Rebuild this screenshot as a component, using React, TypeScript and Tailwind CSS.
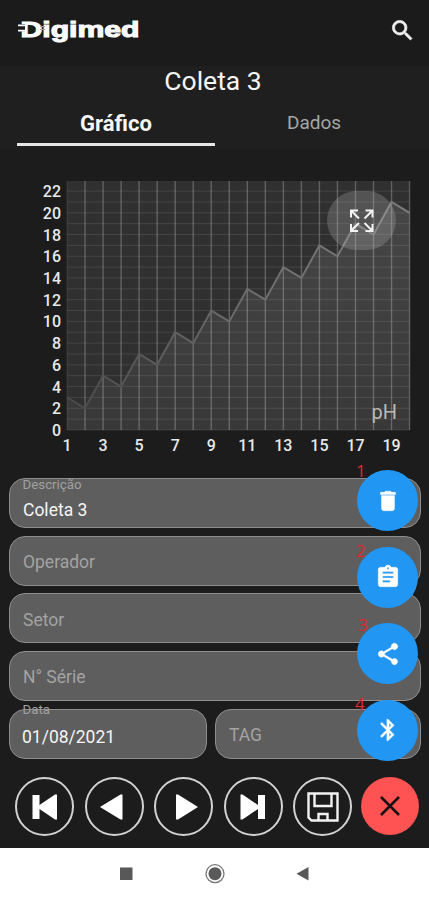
import { MdAssignment, MdBluetooth, MdDelete, MdSearch, MdShare } from "react-icons/md";
import type { ReactNode } from "react";

const readings = [3, 2, 5, 4, 7, 6, 9, 8, 11, 10, 13, 12, 15, 14, 17, 16, 19, 18, 21, 20];

const LEFT = 67;
const BOTTOM = 281;
const TOP = 32;
const STEP_X = 18.03;
const STEP_Y = 10.86;

const xAt = (index: number) => LEFT + index * STEP_X;
const yAt = (value: number) => BOTTOM - value * STEP_Y;

const Logo = () => (
  <svg width="124" height="30" viewBox="0 0 124 30" className="overflow-visible">
    <g fill="#fafafa" stroke="#fafafa" strokeWidth="1.1" fontFamily="'Liberation Sans', sans-serif" fontWeight="700">
      <text x="2.5" y="21.5" fontSize="22.5" textLength="119" lengthAdjust="spacingAndGlyphs">
        Digimed
      </text>
    </g>
    <rect x="1" y="9.2" width="6" height="7" fill="#1b1b1b" />
    <path d="M0 10.4h9M0 15.6h9" stroke="#fafafa" strokeWidth="1.6" />
    <path d="M22 11.5h5M22 14.5h5" stroke="#9d9d9d" strokeWidth="1" />
  </svg>
);

const Chart = () => {
  const points = readings.map((value, i) => `${xAt(i)},${yAt(value)}`).join(" ");
  const right = xAt(readings.length - 1);

  return (
    <svg width="429" height="322" viewBox="0 0 429 322" className="block">
      <defs>
        <linearGradient id="line" gradientUnits="userSpaceOnUse" x1={LEFT} y1="0" x2={right} y2="0">
          <stop offset="0" stopColor="#484848" />
          <stop offset="0.5" stopColor="#6c6c6c" />
          <stop offset="1" stopColor="#7c7c7c" />
        </linearGradient>
        <linearGradient id="area" x1="0" y1="0" x2="0" y2="1">
          <stop offset="0" stopColor="#ffffff" stopOpacity="0.11" />
          <stop offset="1" stopColor="#ffffff" stopOpacity="0.04" />
        </linearGradient>
      </defs>
      <rect x={LEFT} y={TOP} width={right - LEFT} height={BOTTOM - TOP} fill="#303030" />
      <polygon points={`${LEFT},${BOTTOM} ${points} ${right},${BOTTOM}`} fill="url(#area)" />
      {Array.from({ length: 23 }, (_, i) => (
        <line key={i} x1={LEFT} x2={right} y1={yAt(i)} y2={yAt(i)} stroke="#fff" strokeOpacity="0.1" />
      ))}
      {readings.map((_, i) => (
        <line
          key={i}
          x1={xAt(i)}
          x2={xAt(i)}
          y1={TOP}
          y2={BOTTOM}
          stroke="#fff"
          strokeOpacity={i === 0 ? 0.08 : 0.24}
          strokeWidth="1.4"
        />
      ))}
      <polyline points={points} fill="none" stroke="url(#line)" strokeWidth="2" />
      <g fill="#e8e8e8" fontFamily="Roboto, sans-serif" fontSize="16" fontWeight="500">
        {Array.from({ length: 12 }, (_, i) => (
          <text key={i} x="61" y={yAt(i * 2) + 6} textAnchor="end">
            {i * 2}
          </text>
        ))}
        {Array.from({ length: 10 }, (_, i) => (
          <text key={i} x={xAt(i * 2)} y="302" textAnchor="middle">
            {i * 2 + 1}
          </text>
        ))}
      </g>
      <text x="371.5" y="269.5" fill="#b9b9b9" fontFamily="Roboto, sans-serif" fontSize="20">
        pH
      </text>
      <rect x="327" y="42" width="69" height="59" rx="29.5" fill="#b0b0b0" fillOpacity="0.28" />
      <path
        d="M351 68.5v-7h7M351.5 62l7.5 7.5M365.5 61.5h7v7M372 62l-7.5 7.5M351 75v7h7M351.5 81.5l7.5-7.5M365.5 82h7v-7M372 81.5l-7.5-7.5"
        fill="none"
        stroke="#f2f2f2"
        strokeWidth="2"
      />
    </svg>
  );
};

interface FieldProps {
  label: string;
  value?: string;
  className?: string;
  labelClass?: string;
  valueClass?: string;
}

const Field = ({ label, value, className = "flex-1", labelClass = "", valueClass = "" }: FieldProps) => (
  <div
    className={`relative flex h-[50px] items-center rounded-[16px] border-[1.5px] border-[#8e8e8e] bg-[#5e5e5e] px-[13.5px] text-[17.5px] ${className}`}
  >
    {value ? (
      <>
        <span className={`absolute left-[13px] text-[13.3px] leading-none text-[#a0a0a0] ${labelClass}`}>{label}</span>
        <span className={`text-[#f5f5f5] ${valueClass}`}>{value}</span>
      </>
    ) : (
      <span className="mt-[3px] text-[#a3a3a3]">{label}</span>
    )}
  </div>
);

const actions = [
  { icon: MdDelete, number: "1", numberClass: "left-[-1px] top-[-8px]" },
  { icon: MdAssignment, number: "2", numberClass: "left-[-1px] top-[-5px]" },
  { icon: MdShare, number: "3", numberClass: "left-[1px] top-[-7px]" },
  { icon: MdBluetooth, number: "4", numberClass: "left-[-2px] top-[-5px]" },
];

const RoundButton = ({ children }: { children: ReactNode }) => (
  <button className="flex size-[59px] items-center justify-center rounded-full border-2 border-[#d2d2d2]">
    <svg width="36" height="36" viewBox="0 0 36 36" fill="#fff">
      {children}
    </svg>
  </button>
);

const App = () => {
  return (
    <div className="flex h-[900px] w-[429px] flex-col overflow-hidden bg-[#1c1c1c] font-[Roboto,sans-serif]">
      <header className="flex h-[66px] items-start justify-between bg-[#1b1b1b] pl-[18px] pr-[13px] pt-[15px]">
        <Logo />
        <MdSearch className="mt-[2px] size-[27px] text-[#f2f2f2] [&>path:last-child]:stroke-[#f2f2f2] [&>path:last-child]:stroke-[0.6]" />
      </header>

      <div className="h-[83px] bg-[#1f1f1f]">
        <h1 className="h-[38px] pr-[3px] text-center text-[26.5px] leading-[29px] text-[#f5f5f5]">Coleta 3</h1>
        <div className="flex pl-[17px] pr-4 text-center">
          <div className="h-[42px] w-[198px] border-b-[3px] border-[#e6e6e6] text-[22px] font-bold leading-[39px] text-[#f7f7f7]">
            Gráfico
          </div>
          <div className="w-[198px] text-[19px] leading-[38px] text-[#a6a6a6]">Dados</div>
        </div>
      </div>

      <Chart />

      <div className="relative mt-[7px] flex flex-col gap-[7.7px] pl-[8.5px] pr-2">
        <div className="flex">
          <Field label="Descrição" value="Coleta 3" labelClass="top-[-1px]" valueClass="mt-3.5" />
        </div>
        <div className="flex">
          <Field label="Operador" />
        </div>
        <div className="flex">
          <Field label="Setor" />
        </div>
        <div className="flex">
          <Field label="N° Série" />
        </div>
        <div className="flex gap-2">
          <Field
            label="Data"
            value="01/08/2021"
            className="w-[198px]"
            labelClass="top-[-7px] left-[12px]"
            valueClass="-ml-px mt-[7px]"
          />
          <Field label="TAG" />
        </div>

        <div className="absolute right-[11px] top-[-8px] flex flex-col gap-[15.6px]">
          {actions.map(({ icon: Icon, number, numberClass }) => (
            <div key={number} className="relative">
              <span className={`absolute font-[Open_Sans,sans-serif] text-[17px] leading-none text-[#e0262f] ${numberClass}`}>
                {number}
              </span>
              <button className="relative flex size-[61px] items-center justify-center rounded-full bg-[#2196f3]">
                <Icon className="size-[26px] text-white [&>path:last-child]:stroke-white [&>path:last-child]:stroke-[0.4]" />
              </button>
            </div>
          ))}
        </div>
      </div>

      <div className="mt-[18.5px] flex gap-[10.6px] pl-[15px]">
        <RoundButton>
          <path d="M5.5 6h7v24h-7zM12.5 16L28 5.5h2v25h-2L12.5 20z" />
        </RoundButton>
        <RoundButton>
          <path d="M26.5 5.5v25h-2L4 18 24.5 5.5z" />
        </RoundButton>
        <RoundButton>
          <path d="M10 5.5v25h2L32 18 12 5.5z" />
        </RoundButton>
        <RoundButton>
          <path d="M30 6h-7v24h7zM23 16L7.500 5.5h-2v25h2L23 20z" />
        </RoundButton>
        <RoundButton>
          <path
            d="M3.5 4.5h29v27H6.5l-3-3zM9.5 5v12h17V5M13.500 31v-6h9v6"
            fill="none"
            stroke="#f2f2f2"
            strokeWidth="2.4"
          />
        </RoundButton>
        <button className="ml-[-2px] flex size-[58px] items-center justify-center rounded-full bg-[#ff5252]">
          <svg width="20" height="20" viewBox="0 0 20 20" stroke="#161010" strokeWidth="2.5">
            <path d="M1 1l18 18M19 1L1 19" />
          </svg>
        </button>
      </div>

      <nav className="mt-auto h-[52.5px] bg-white">
        <svg width="429" height="52" viewBox="0 0 429 52">
          <rect x="120" y="19.5" width="12.5" height="12.5" fill="#585858" />
          <circle cx="215" cy="25.7" r="9" fill="none" stroke="#777" strokeWidth="1.3" />
          <circle cx="215" cy="25.7" r="6.5" fill="#5a5a5a" />
          <path d="M296.5 25.7l12-6.7v13.5z" fill="#585858" />
        </svg>
      </nav>
    </div>
  );
};

export default App;
